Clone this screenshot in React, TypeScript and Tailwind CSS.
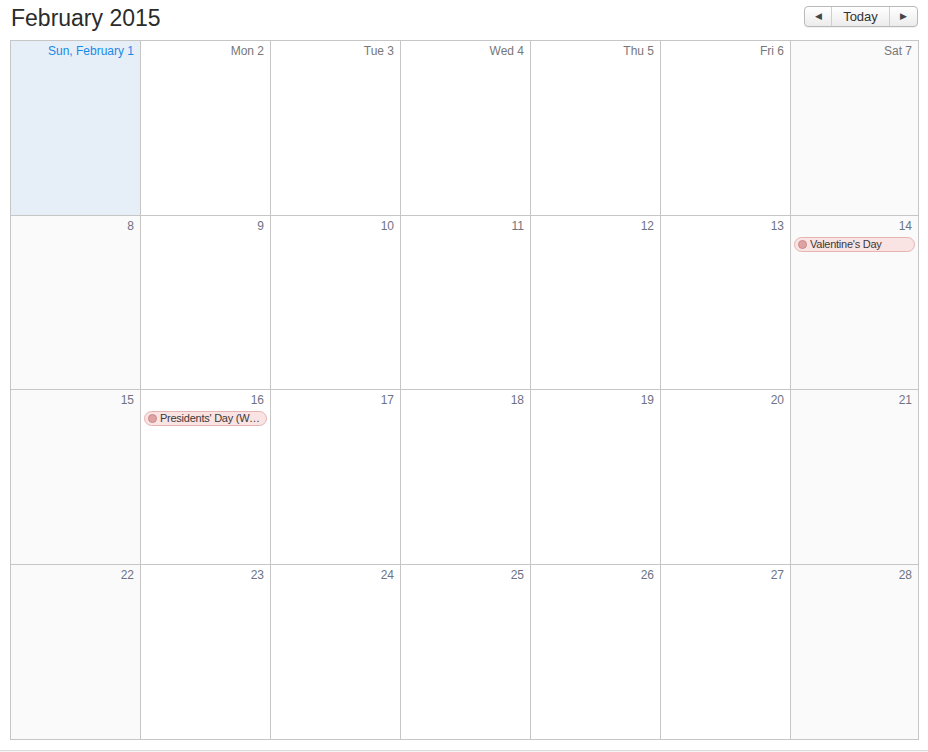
const font = { fontFamily: '"Liberation Sans", Arial, sans-serif' }

type Cell = { label: string; events?: string[] }

const weeks: Cell[][] = [
  [
    { label: 'Sun, February 1' },
    { label: 'Mon 2' },
    { label: 'Tue 3' },
    { label: 'Wed 4' },
    { label: 'Thu 5' },
    { label: 'Fri 6' },
    { label: 'Sat 7' },
  ],
  [
    { label: '8' },
    { label: '9' },
    { label: '10' },
    { label: '11' },
    { label: '12' },
    { label: '13' },
    { label: '14', events: ["Valentine's Day"] },
  ],
  [
    { label: '15' },
    { label: '16', events: ["Presidents' Day (Washington's Birthday)"] },
    { label: '17' },
    { label: '18' },
    { label: '19' },
    { label: '20' },
    { label: '21' },
  ],
  [
    { label: '22' },
    { label: '23' },
    { label: '24' },
    { label: '25' },
    { label: '26' },
    { label: '27' },
    { label: '28' },
  ],
]

function EventPill({ title }: { title: string }) {
  return (
    <div className="mx-[3px] mt-[4px] flex h-[15px] items-center rounded-full border border-[#e6b3b3] bg-[#f9e3e3] pl-[3px] pr-[3px]">
      <span className="h-[9px] w-[9px] shrink-0 rounded-full border border-[#c98a8a] bg-[#dfa3a3]" />
      <span className="ml-[3px] truncate text-[11px] leading-[13px] tracking-[-0.25px] text-[#3a3a3a]">{title}</span>
    </div>
  )
}

export default function App() {
  return (
    <div className="relative h-[752px] w-[928px] overflow-hidden bg-white" style={font}>
      {/* Header */}
      <div className="flex h-[40px] items-start justify-between pl-[11px] pr-[10px]">
        <h1 className="mt-[3px] text-[23px] leading-[30px] text-[#2b2b2b]">February 2015</h1>
        <div className="mt-[6px] flex h-[21px] overflow-hidden rounded-[4px] border border-[#b9b9b9] bg-gradient-to-b from-white to-[#ececec] text-[13px] text-[#333] shadow-[0_1px_0_rgba(0,0,0,0.05)]">
          <button className="flex w-[27px] items-center justify-center border-r border-[#cfcfcf]">
            <span className="text-[9px] text-[#444]">◀</span>
          </button>
          <button className="flex w-[58px] items-center justify-center border-r border-[#cfcfcf] leading-[19px]">
            Today
          </button>
          <button className="flex w-[27px] items-center justify-center">
            <span className="text-[9px] text-[#444]">▶</span>
          </button>
        </div>
      </div>

      {/* Month grid */}
      <div className="ml-[10px] grid w-[909px] grid-cols-[130px_130px_130px_130px_130px_130px_128px] grid-rows-[175px_174px_175px_175px] border-l border-t border-[#c6c6c6]">
        {weeks.flat().map((cell, i) => {
          const col = i % 7
          const isToday = i === 0
          const weekend = col === 0 || col === 6
          const bg = isToday ? 'bg-[#e6eef8]' : weekend ? 'bg-[#fafafa]' : 'bg-white'
          const color = isToday ? 'text-[#1a8ae6]' : i < 7 ? 'text-[#777]' : 'text-[#6d7384]'
          return (
            <div key={i} className={`min-w-0 border-b border-r border-[#c6c6c6] ${bg}`}>
              <div className={`pr-[6px] pt-[3px] text-right text-[12px] leading-[14px] ${color}`}>{cell.label}</div>
              {cell.events?.map((e) => (
                <EventPill key={e} title={e} />
              ))}
            </div>
          )
        })}
      </div>

      <div className="absolute bottom-0 left-0 h-[2px] w-full border-t border-[#dcdcdc] bg-[#f4f4f4]" />
    </div>
  )
}
